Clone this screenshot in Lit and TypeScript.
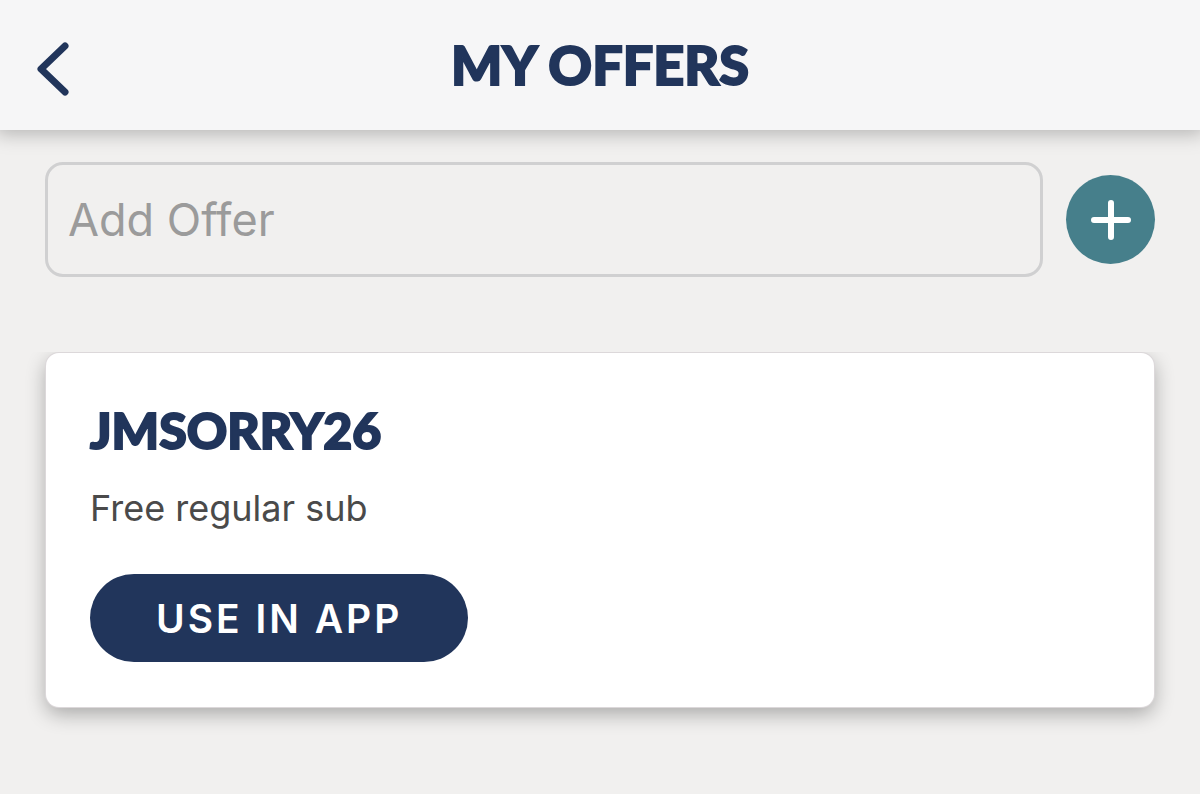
import { LitElement, html, css } from "lit";
import { customElement } from "lit/decorators.js";

@customElement("app-root")
export class AppRoot extends LitElement {
  static styles = css`
    :host {
      display: block;
      min-height: 100vh;
      background: #f1f0ef;
      font-family: Inter, "Liberation Sans", sans-serif;
      color: #21355b;
    }
    * { box-sizing: border-box; }
    button { font: inherit; border: 0; padding: 0; cursor: pointer; }
    header {
      display: grid;
      grid-template-columns: 96px 1fr 96px;
      align-items: center;
      height: 130px;
      background: #f6f6f7;
      box-shadow: 0 0 18px 4px rgba(0, 0, 0, 0.25);
      clip-path: inset(0 0 -40px);
    }
    .back { background: none; color: inherit; height: 80px; padding: 8px 0 0 8px; }
    .back svg { display: block; margin: auto; }
    h1, h2 {
      margin: 0;
      font-family: Lato, sans-serif;
      font-weight: 900;
      -webkit-text-stroke: 2px currentColor;
      stroke-linejoin: round;
    }
    h1 { text-align: center; font-size: 54px; line-height: 72px; }
    main { padding: 32px 45px; }
    form { display: flex; align-items: center; gap: 23px; margin-bottom: 76px; }
    input {
      flex: 1;
      min-width: 0;
      height: 115px;
      padding: 0 20px;
      border: 3px solid #d0d0d1;
      border-radius: 18px;
      background: transparent;
      font: inherit;
      font-size: 45px;
      color: #4a4a4a;
    }
    input::placeholder { color: #9b9b9b; opacity: 1; }
    .add {
      display: grid;
      place-items: center;
      width: 89px;
      height: 89px;
      border-radius: 50%;
      background: #467f8b;
      color: #fff;
    }
    .card {
      margin: 0 1px;
      padding: 45px 44px;
      border-radius: 13px;
      background: #fff;
      box-shadow: 0 0 0 1px #dcd8da, 0 7px 20px rgba(0, 0, 0, 0.3);
      clip-path: inset(-1px -40px -40px);
    }
    h2 { font-size: 50px; line-height: 64px; }
    p { margin: 24px 0 44px; font-size: 36px; line-height: 44px; color: #4a4a4a; }
    .use {
      display: block;
      height: 88px;
      padding: 0 66px;
      border-radius: 44px;
      background: #21355b;
      color: #fff;
      font-size: 39px;
      font-weight: 600;
      letter-spacing: 3px;
    }
  `;

  render() {
    return html`
      <header>
        <button class="back" aria-label="Back">
          <svg width="34" height="54" viewBox="0 0 34 54" fill="none" stroke="currentColor" stroke-width="7" stroke-linecap="round" stroke-linejoin="round"><path d="M30 4 6 27l24 23" /></svg>
        </button>
        <h1>MY OFFERS</h1>
      </header>
      <main>
        <form @submit=${(e: Event) => e.preventDefault()}>
          <input type="text" placeholder="Add Offer" aria-label="Add Offer" />
          <button class="add" aria-label="Add">
            <svg width="40" height="40" viewBox="0 0 40 40" fill="none" stroke="currentColor" stroke-width="6" stroke-linecap="round"><path d="M20 3v34M3 20h34" /></svg>
          </button>
        </form>
        <article class="card">
          <h2>JMSORRY26</h2>
          <p>Free regular sub</p>
          <button class="use">USE IN APP</button>
        </article>
      </main>
    `;
  }
}
